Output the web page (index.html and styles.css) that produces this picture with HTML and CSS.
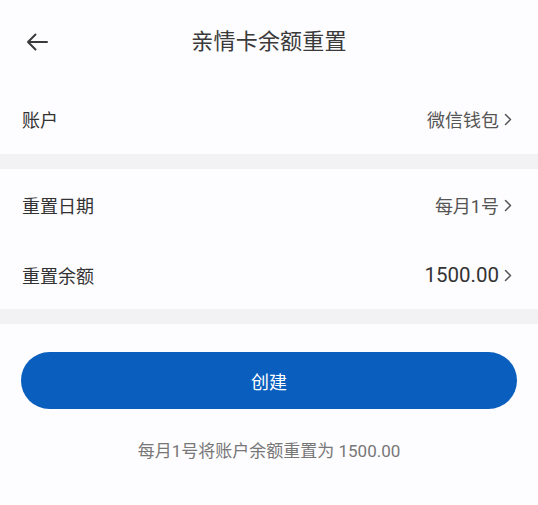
FILE: index.html
```html
<!DOCTYPE html>
<html lang="zh-CN">
<head>
<meta charset="utf-8">
<title>亲情卡余额重置</title>
<link rel="stylesheet" href="styles.css">
</head>
<body>
<div class="page">
  <header class="topbar">
    <span class="back">
      <svg width="22" height="18" viewBox="0 0 22 18"><path d="M21 9H2M9.5 1.5L2 9l7.5 7.5" fill="none" stroke="#3a3a3a" stroke-width="2" stroke-linecap="round" stroke-linejoin="round"/></svg>
    </span>
    <h1 class="title">亲情卡余额重置</h1>
  </header>

  <section class="group">
    <div class="row">
      <span class="label">账户</span>
      <span class="value">微信钱包<svg class="chev" width="8" height="13" viewBox="0 0 8 13"><path d="M1.5 1.5L6.5 6.5l-5 5" fill="none" stroke="#555" stroke-width="1.5" stroke-linecap="round" stroke-linejoin="round"/></svg></span>
    </div>
  </section>

  <div class="gap"></div>

  <section class="group">
    <div class="row row-date">
      <span class="label">重置日期</span>
      <span class="value">每月1号<svg class="chev" width="8" height="13" viewBox="0 0 8 13"><path d="M1.5 1.5L6.5 6.5l-5 5" fill="none" stroke="#555" stroke-width="1.5" stroke-linecap="round" stroke-linejoin="round"/></svg></span>
    </div>
    <div class="row row-amount">
      <span class="label">重置余额</span>
      <span class="value value-amount">1500.00<svg class="chev" width="8" height="13" viewBox="0 0 8 13"><path d="M1.5 1.5L6.5 6.5l-5 5" fill="none" stroke="#555" stroke-width="1.5" stroke-linecap="round" stroke-linejoin="round"/></svg></span>
    </div>
  </section>

  <div class="gap"></div>

  <div class="actions">
    <button class="primary">创建</button>
    <p class="hint">每月1号将账户余额重置为 1500.00</p>
  </div>
</div>
</body>
</html>
```

FILE: styles.css
```css
* { box-sizing: border-box; }
html, body {
  margin: 0;
  padding: 0;
  background: #fdfcfe;
}
body {
  font-family: "Roboto", "Noto Sans CJK SC", "Noto Sans", sans-serif;
  color: #333;
}
.page {
  width: 538px;
  height: 505px;
  display: flex;
  flex-direction: column;
}
.topbar {
  height: 84px;
  position: relative;
  display: flex;
  align-items: center;
  justify-content: center;
}
.back {
  position: absolute;
  left: 26px;
  top: 33px;
  display: flex;
}
.title {
  margin: 0;
  font-size: 22px;
  font-weight: 400;
  color: #3a3a3a;
  letter-spacing: 0.2px;
  line-height: 1;
}
.group {
  display: flex;
  flex-direction: column;
  padding: 0 26px 0 22px;
}
.row {
  height: 70px;
  display: flex;
  align-items: center;
  justify-content: space-between;
}
.row-date {
  height: 72px;
}
.row-amount {
  height: 68px;
}
.label {
  font-size: 18px;
  color: #333;
}
.value {
  display: flex;
  align-items: center;
  font-size: 18px;
  color: #555;
}
.value-amount {
  font-size: 20.5px;
  color: #333;
}
.chev {
  margin-left: 5px;
}
.gap {
  height: 15px;
  background: #f2f2f4;
}
.actions {
  display: flex;
  flex-direction: column;
  align-items: center;
  padding: 28px 21px 0;
}
.primary {
  width: 100%;
  height: 57px;
  border: none;
  border-radius: 29px;
  background: #0a5fbe;
  color: #fff;
  font-family: "Roboto", "Noto Sans CJK SC", sans-serif;
  font-size: 18px;
  cursor: pointer;
}
.hint {
  margin: 28px 0 0;
  font-size: 17px;
  color: #777;
}
```
